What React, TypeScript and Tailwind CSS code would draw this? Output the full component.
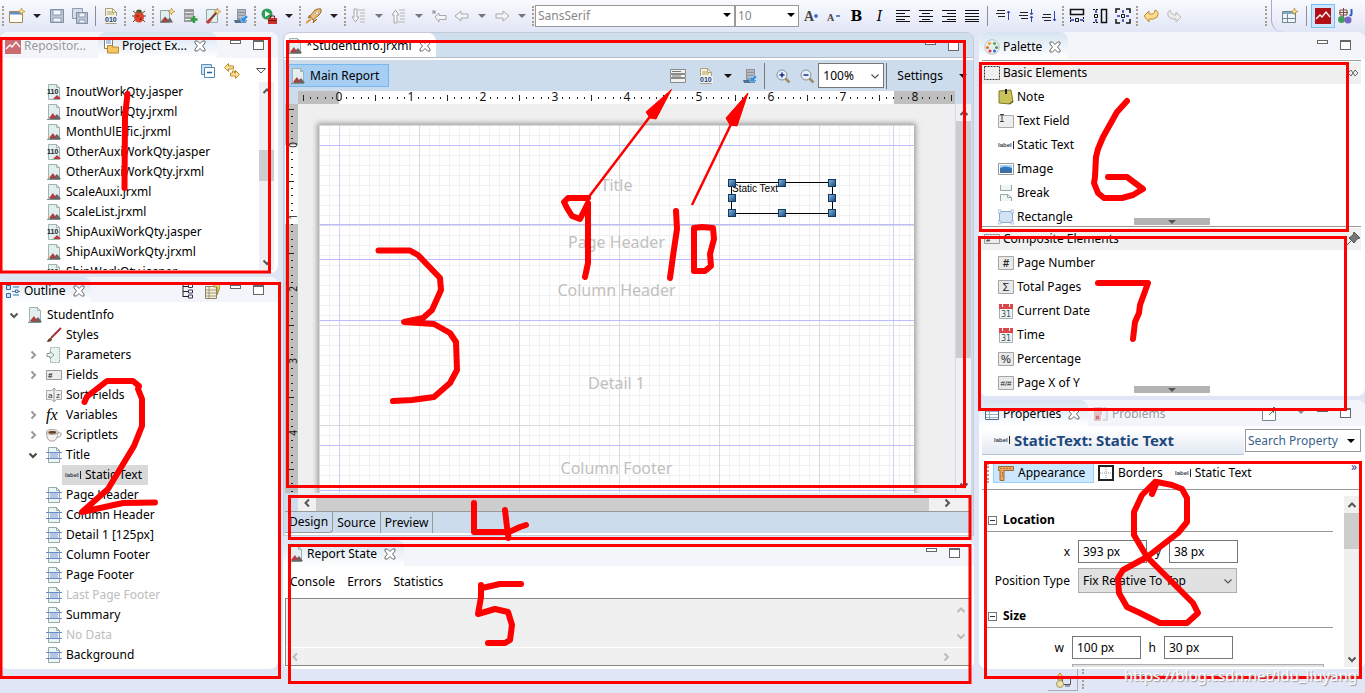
import { ReactNode } from 'react';
import clsx from 'clsx';

/* ---------- icons ---------- */

interface SvgProps {
  children: ReactNode;
  className?: string;
}

function Svg({ children, className }: SvgProps) {
  return (
    <svg viewBox="0 0 16 16" className={clsx('size-4 shrink-0', className)} fill="none" aria-hidden="true">
      {children}
    </svg>
  );
}

function Sheet() {
  return <path d="M2.5.5h8l3 3v12h-11z M10.5.5v3h3" fill="#e3efef" stroke="#9fb3b1" />;
}

function ReportIcon({ className }: { className?: string }) {
  return (
    <Svg className={className}>
      <Sheet />
      <path d="M3 15l4-4 2 1 2-2 4 5z" fill="#6b6464" />
      <path d="M3 14l4-5 3 5z" fill="#b93a3a" />
      <path d="M1 15.500h13" stroke="#7d8f8d" />
    </Svg>
  );
}

function JasperIcon() {
  return (
    <Svg>
      <Sheet />
      <path d="M7 15l4-4 4 4z" fill="#b93a3a" />
      <text x="1" y="10" fontSize="7" fontWeight="bold" fill="#222" fontFamily="Liberation Sans">110</text>
    </Svg>
  );
}

function BandIcon() {
  return (
    <Svg>
      <path d="M2.500.5h8l3 3v12h-11z" fill="#eef5f5" stroke="#93aaa6" />
      <path d="M4 6h8v5H4z" fill="#b3c6e8" />
      <path d="M0 5.500h16M0 11.500h16" stroke="#6b8cc8" />
      <path d="M10.500.5v3h3" stroke="#93aaa6" />
    </Svg>
  );
}

function BinaryIcon() {
  return (
    <Svg>
      <path d="M2.500.5h7l4 4v11h-11z" fill="#f5f1e2" stroke="#a9a07c" />
      <path d="M9.500.5v4h4M4 4h5M4 6h7" stroke="#b5a565" />
      <path d="M2 8h13v7H2z" fill="#f0f2f6" />
      <text x="2" y="14" fontSize="7" fontWeight="bold" fill="#23406e" fontFamily="Liberation Sans">010</text>
    </Svg>
  );
}

function ServerIcon() {
  return (
    <Svg>
      <path d="M4 1h9v11H4z" fill="#8f959b" />
      <path d="M5 3h7M5 6h7M5 9h7" stroke="#d5dade" />
      <path d="M1 12h13l-1 3H2z" fill="#4f6f91" />
      <path d="M8 14V8l2 2 3-3 2 2-3 3 2 2z" fill="#2f8fe0" stroke="#dff0ff" strokeWidth=".5" />
    </Svg>
  );
}

function LabelIcon() {
  return (
    <Svg>
      <text x="0" y="10" fontSize="6" fontWeight="bold" fill="#3c4650" fontFamily="Liberation Sans">label</text>
      <path d="M15.500 4v8" stroke="#222" />
    </Svg>
  );
}

function BoxIcon({ mark }: { mark: string }) {
  return (
    <Svg>
      <path d="M.5 1.500h15v13H.5z" fill="#e9e9e9" stroke="#a5a5a5" />
      <text x="8" y={mark.length > 1 ? 11 : 12} textAnchor="middle" fontSize={mark.length > 1 ? 8 : 11} fontWeight={mark === '#' ? 'bold' : 'normal'} fill="#222" fontFamily="Liberation Sans">{mark}</text>
    </Svg>
  );
}

function CalendarIcon() {
  return (
    <Svg>
      <path d="M1.500 3.500h13v12h-13z" fill="#f2f5f4" stroke="#9fb0ad" />
      <path d="M1 1h14v5H1z" fill="#d9474a" />
      <path d="M4.500 0v4M11.500 0v4" stroke="#fff" />
      <text x="8" y="14" textAnchor="middle" fontSize="8" fill="#31525a" fontFamily="DejaVu Sans">31</text>
    </Svg>
  );
}

function CloseIcon() {
  return (
    <svg viewBox="0 0 12 12" className="size-3 shrink-0" fill="#fff" stroke="#6a6a6a" aria-hidden="true">
      <path d="M1 1h2.500L6 3.500 8.500 1H11v2L8.500 6 11 9v2H8.500L6 8.500 3.500 11H1V9l2.500-3L1 3z" />
    </svg>
  );
}

function DownTriangle({ color = '#333' }: { color?: string }) {
  return (
    <svg viewBox="0 0 8 4" className="h-1 w-2 shrink-0" aria-hidden="true">
      <path d="M0 0h8L4 4z" fill={color} />
    </svg>
  );
}

const chevrons = {
  up: 'M1.500 7L5 3.500 8.500 7',
  down: 'M1.500 3.500L5 7l3.500-3.500',
  left: 'M7 1.500L3.500 5 7 8.500',
  right: 'M3.500 1.500L7 5 3.500 8.500',
};

function Chevron({ dir, color = '#555', thin }: { dir: keyof typeof chevrons; color?: string; thin?: boolean }) {
  return (
    <svg viewBox="0 0 10 10" className="size-2.5 shrink-0" fill="none" aria-hidden="true">
      <path d={chevrons[dir]} stroke={color} strokeWidth={thin ? 1.2 : 2} />
    </svg>
  );
}

function WindowButtons() {
  return (
    <div className="flex items-start justify-end gap-3 pr-3.5">
      <button aria-label="Minimize" className="h-1 w-[11px] border border-[#666] bg-white" />
      <button aria-label="Maximize" className="h-2.5 w-[11px] border border-t-2 border-[#666] bg-white" />
    </div>
  );
}

const AlignIcon = ({ d }: { d: string }) => (
  <Svg>
    <path d={d} stroke="#111" shapeRendering="crispEdges" />
  </Svg>
);

const Arrow = ({ d, fill = '#f4f5f8', stroke = '#a9a9a9' }: { d: string; fill?: string; stroke?: string }) => (
  <Svg>
    <path d={d} fill={fill} stroke={stroke} />
  </Svg>
);

const backArrow = 'M1 8l6-5v3h7v4H7v3z';
const forwardArrow = 'M15 8L9 3v3H2v4h7v3z';

/* ---------- main toolbar ---------- */

type ToolItem = { kind: 'icon'; name: string; icon: ReactNode } | { kind: 'menu'; dim?: boolean } | { kind: 'grip' } | { kind: 'line' };

const icon = (name: string, node: ReactNode): ToolItem => ({ kind: 'icon', name, icon: node });
const menu: ToolItem = { kind: 'menu' };
const dimMenu: ToolItem = { kind: 'menu', dim: true };
const grip: ToolItem = { kind: 'grip' };
const line: ToolItem = { kind: 'line' };

const star = <path d="M12.500 0l1 2.500 2.500 1-2.500 1-1 2.500-1-2.500-2.500-1 2.500-1z" fill="#fbe29a" stroke="#b98a2b" strokeWidth=".7" />;

const leftTools: ToolItem[] = [
  grip,
  icon('New', <Svg><path d="M.5 3.500h13v11H.5z" fill="#fdfdf5" stroke="#a8884a" /><path d="M1 4h12v2.500H1z" fill="#5b8fd0" />{star}</Svg>),
  menu,
  icon('Save', <Svg><path d="M1.500 1.500h13v13h-13z" fill="#b9c7d9" stroke="#7c8da3" /><path d="M4 2h8v5H4zM4 10h8v4H4z" fill="#f3f6fa" stroke="#8c9bb0" /></Svg>),
  icon('Save All', <Svg><path d="M.5.5h10v10H.5z" fill="#d5dde8" stroke="#8c9bb0" /><path d="M4.500 4.500h11v11h-11z" fill="#b9c7d9" stroke="#7c8da3" /><path d="M7 5h6v4H7zM7 12h6v3H7z" fill="#f3f6fa" stroke="#8c9bb0" /></Svg>),
  line,
  icon('Compile', <BinaryIcon />),
  grip,
  icon('Debug', <Svg><path d="M2 3l4 3M14 3l-4 3M1 8h14M2 14l4-4M14 14l-4-4" stroke="#4b4b2a" /><ellipse cx="8" cy="9" rx="5" ry="5.500" fill="#d8442b" /><path d="M5 4.500a3 3 0 016 0z" fill="#4a5a2a" /><circle cx="6.500" cy="8" r="1" fill="#8b1a0c" /><circle cx="9.500" cy="11" r="1" fill="#8b1a0c" /></Svg>),
  grip,
  icon('New Report', <Svg><path d="M1.500 2.500h9v12h-9z" fill="#e3efef" stroke="#8fa5a3" /><path d="M1 14.500l5-6 3 3 2-2 3 5z" fill="#6b6464" /><path d="M3 14l3-5 3 4z" fill="#b93a3a" />{star}</Svg>),
  icon('New Data Adapter', <Svg><path d="M2 1h10v13H2z" fill="#9a9a9a" /><path d="M3 4.500h8M3 8h8M3 11.500h8" stroke="#eee" /><path d="M12 8v7M8.500 11.500h7" stroke="#2f9e44" strokeWidth="2.500" /></Svg>),
  icon('New Style', <Svg><path d="M1.500 1.500h11v13h-11z" fill="#e3efef" stroke="#8fa5a3" /><path d="M3 14L12 4" stroke="#7a3a2a" strokeWidth="2" /><path d="M2 15l4-4" stroke="#c43a3a" strokeWidth="3" />{star}</Svg>),
  grip,
  icon('Publish', <ServerIcon />),
  grip,
  icon('Run', <Svg><circle cx="6" cy="6" r="5.500" fill="#2f9e5a" /><path d="M4 3l5 3-5 3z" fill="#fff" /><path d="M7 10h9v6H7z" fill="#c8322b" /><path d="M9.500 10V8h4v2M7 12.500h9" stroke="#7a1712" /></Svg>),
  menu,
  grip,
  icon('Launch', <Svg><path d="M4 8l5-6q4-2 6-1 1 3-2 6l-6 5z" fill="#ecc07a" stroke="#9a6b2c" /><path d="M4 7L2 10l3-1M8 12l-1 3 4-4" fill="#c98a3a" stroke="#9a6b2c" /><path d="M0 15l5-4" stroke="#e8973a" strokeWidth="2" /><circle cx="11" cy="5" r="1.500" fill="#fff" stroke="#888" strokeWidth=".5" /></Svg>),
  menu,
  grip,
  icon('Next Annotation', <Svg><path d="M7 2h7M9 5h5M9 8h5M9 11h5M9 14h5" stroke="#b5b5b5" /><path d="M3 1h3v8h2l-3.500 5L1 9h2z" fill="#f4f5f8" stroke="#a9a9a9" /></Svg>),
  dimMenu,
  icon('Previous Annotation', <Svg><path d="M8 2h6M9 5h5M9 8h5M9 11h5M7 14h7" stroke="#b5b5b5" /><path d="M3 15h3V7h2L4.500 2 1 7h2z" fill="#f4f5f8" stroke="#a9a9a9" /></Svg>),
  dimMenu,
  icon('Last Edit', <Svg><path d="M1 4h4M3 2v4M1.500 2.500l3 3M4.500 2.500l-3 3" stroke="#999" /><path d="M4 9l4-4v2.500h7v4H8V14z" fill="#f4f5f8" stroke="#a9a9a9" /></Svg>),
  icon('Back', <Arrow d={backArrow} />),
  dimMenu,
  icon('Forward', <Arrow d={forwardArrow} />),
  dimMenu,
  grip,
];

const fontSign = (size: number, sign: string) => (
  <Svg>
    <text x="1" y="13" fontSize={size} fontWeight="bold" fill="#444" fontFamily="Liberation Serif">A</text>
    <path d={sign} stroke="#3560c0" strokeWidth="1.500" />
  </Svg>
);

const rightTools: ToolItem[] = [
  icon('Increase Font', fontSign(14, 'M11 8h4M13 6v4')),
  icon('Decrease Font', fontSign(10, 'M10 8h4')),
  icon('Bold', <span className="font-['DejaVu_Serif'] text-sm font-bold">B</span>),
  icon('Italic', <span className="font-['DejaVu_Serif'] text-sm italic">I</span>),
  icon('Align Left', <AlignIcon d="M1 2.500h14M1 5.500h9M1 8.500h14M1 11.500h9M1 13.500h14" />),
  icon('Align Center', <AlignIcon d="M1 2.500h14M4 5.500h8M1 8.500h14M4 11.500h8M1 13.500h14" />),
  icon('Align Right', <AlignIcon d="M1 2.500h14M6 5.500h9M1 8.500h14M6 11.500h9M1 13.500h14" />),
  icon('Justify', <AlignIcon d="M1 2.500h14M1 5.500h14M1 8.500h14M1 11.500h14M1 13.500h14" />),
  line,
  icon('Align Top', <Svg><path d="M2 2.500h8M1 5.500h9M3 8.500h7" stroke="#222" /><path d="M13.500 12V3M12 5l1.500-2L15 5" stroke="#3344aa" /></Svg>),
  icon('Align Middle', <Svg><path d="M2 4.500h8M1 7.500h9M3 10.500h7" stroke="#222" /><path d="M13.500 1v5M13.500 9v5M12 5l1.500 2L15 5M12 10l1.500-2 1.500 2" stroke="#3344aa" /></Svg>),
  icon('Align Bottom', <Svg><path d="M2 6.500h8M1 9.500h9M3 12.500h7" stroke="#222" /><path d="M13.500 3v10M12 11l1.500 2L15 11" stroke="#3344aa" /></Svg>),
  grip,
  icon('Fit Width', <Svg><path d="M1.500 1.500h13v5h-13z" stroke="#111" strokeWidth="1.500" /><path d="M1.500 9v6M14.500 9v6" stroke="#111" strokeDasharray="2 1" /><path d="M6.500 10.500h3v3h-3z" stroke="#111" /><path d="M2 12h3M11 12h3" stroke="#2233bb" strokeWidth="1.500" /></Svg>),
  icon('Fit Height', <Svg><path d="M9.500 1.500h5v13h-5z" stroke="#111" strokeWidth="1.500" /><path d="M1 1.500h6M1 14.500h6" stroke="#111" strokeDasharray="2 1" /><path d="M2.500 6.500h3v3h-3z" stroke="#111" /><path d="M4 2v3M4 11v3" stroke="#2233bb" strokeWidth="1.500" /></Svg>),
  icon('Fit Both', <Svg><path d="M1 5V1h4M11 1h4v4M15 11v4h-4M5 15H1v-4" stroke="#111" strokeWidth="1.500" /><path d="M6.500 6.500h3v3h-3z" stroke="#111" /><path d="M8 2v3M8 11v3M2 8h3M11 8h3" stroke="#2233bb" strokeWidth="1.500" /></Svg>),
  grip,
  icon('Undo', <Arrow fill="#fbdc8c" stroke="#c08a2a" d="M1 8l5-5v3q6 1 6-4 5 2 2 7-3 3-8 2v3z" />),
  icon('Redo', <Arrow fill="#ececec" stroke="#b9b9b9" d="M15 9l-5-5v3Q5 7 4 2 0 5 3 9q3 3 7 2v3z" />),
];

function Grip() {
  return <span className="h-5 w-0 border-l-2 border-dotted border-[#a89f8e]" />;
}

function Tools({ items }: { items: ToolItem[] }) {
  return (
    <>
      {items.map((item, i) => {
        switch (item.kind) {
          case 'icon':
            return <button key={i} aria-label={item.name} className="flex h-6 w-[23px] shrink-0 items-center justify-center">{item.icon}</button>;
          case 'menu':
            return <button key={i} aria-label="More" className="flex h-6 w-[17px] shrink-0 items-center justify-center"><DownTriangle color={item.dim ? '#777' : '#222'} /></button>;
          case 'grip':
            return <span key={i} className="flex w-[5px] shrink-0 justify-center"><Grip /></span>;
          default:
            return <span key={i} className="flex w-2 shrink-0 justify-center"><span className="h-5 w-px bg-[#8a8f9a]" /></span>;
        }
      })}
    </>
  );
}

function MainToolbar() {
  return (
    <header className="flex h-8 shrink-0 items-center bg-linear-to-b from-[#f9fafe] to-[#e1e6f6]">
      <Tools items={leftTools} />
      <Combo label="Font name" value="SansSerif" className="w-[200px]" />
      <Combo label="Font size" value="10" className="w-16" />
      <Tools items={rightTools} />
      <div className="ml-auto flex h-8 items-center">
        <Grip />
        <div className="ml-1 flex h-8 items-center rounded-bl-xl border-l border-[#a9adc0] pr-2.5 pl-1.5">
          <button aria-label="Open Perspective" className="flex w-6 justify-center">
            <Svg><path d="M.5 3.500h13v11H.5z" fill="#eef5fb" stroke="#6f8792" /><path d="M1 4h12v2H1z" fill="#7fa9bd" /><path d="M5.500 6v9M1 10.500h12" stroke="#6f8792" />{star}</Svg>
          </button>
          <span className="mx-1 h-5 w-px bg-[#8a8f9a]" />
          <button aria-label="Report Design" className="flex h-6 w-6 items-center justify-center border border-[#7fbdf0] bg-[#cce6ff]">
            <Svg><path d="M0 0h16v16H0z" fill="#b11116" /><path d="M1 11l4-4 2 2 4-5 4 5" stroke="#fff" strokeWidth="1.300" /></Svg>
          </button>
          <button aria-label="Java" className="flex w-5 justify-center">
            <Svg><path d="M3 2h7v5H3zM6.500 0v10M2 4.500h9" stroke="#7b4a3a" /><path d="M14.500 1v5q0 2-2 1" stroke="#2f5fc0" strokeWidth="2" /><circle cx="4.500" cy="11.500" r="3.500" fill="#3fa05a" /><circle cx="11" cy="12" r="3.500" fill="#7a63c0" /></Svg>
          </button>
        </div>
      </div>
    </header>
  );
}

function Combo({ label, value, className }: { label: string; value: string; className: string }) {
  return (
    <div className={clsx('relative shrink-0', className)}>
      <select aria-label={label} defaultValue={value} className="h-[22px] w-full appearance-none border border-[#999] bg-white px-0.5 text-[#888]">
        <option>{value}</option>
      </select>
      <span className="pointer-events-none absolute top-2 right-1 flex"><DownTriangle color="#000" /></span>
    </div>
  );
}

/* ---------- shared pane parts ---------- */

interface TabProps {
  icon: ReactNode;
  title: string;
  active?: boolean;
  className?: string;
}

function PaneTab({ icon: tabIcon, title, active, className }: TabProps) {
  return (
    <button
      className={clsx(
        'flex h-full shrink-0 items-center gap-[3px] pt-0.5 pl-[5px]',
        active ? 'rounded-tr-lg bg-linear-to-b from-[#d6e4f0] to-white' : 'text-[#999]',
        className,
      )}
    >
      {tabIcon}
      <span>{title}</span>
      {active && <span className="ml-1"><CloseIcon /></span>}
    </button>
  );
}

function VScroll({ thumb, className }: { thumb: string; className?: string }) {
  return (
    <div className={clsx('flex w-[15px] shrink-0 flex-col items-center bg-[#f0f0f0]', className)}>
      <span className="flex h-[17px] shrink-0 items-center"><Chevron dir="up" /></span>
      <div className="min-h-0 w-full flex-1"><div className={clsx('w-full bg-[#cdcdcd]', thumb)} /></div>
      <span className="flex h-[17px] shrink-0 items-center"><Chevron dir="down" /></span>
    </div>
  );
}

/* ---------- project explorer ---------- */

const files = [
  'InoutWorkQty.jasper',
  'InoutWorkQty.jrxml',
  'MonthUlEffic.jrxml',
  'OtherAuxiWorkQty.jasper',
  'OtherAuxiWorkQty.jrxml',
  'ScaleAuxi.jrxml',
  'ScaleList.jrxml',
  'ShipAuxiWorkQty.jasper',
  'ShipAuxiWorkQty.jrxml',
  'ShipWorkQty.jasper',
];

function ProjectExplorer() {
  return (
    <section className="flex h-[241px] shrink-0 flex-col overflow-hidden rounded-t-lg rounded-br-lg bg-white">
      <div className="flex h-[26px] shrink-0 bg-[#f4f5fb]">
        <PaneTab
          title="Repositor..."
          className="w-[98px]"
          icon={<Svg className="opacity-60"><path d="M0 0h16v16H0z" fill="#b11116" /><path d="M1 11l4-4 2 2 4-5 4 5" stroke="#fff" strokeWidth="1.300" /></Svg>}
        />
        <PaneTab
          title="Project Ex..."
          active
          className="w-[119px] rounded-tl-lg"
          icon={<Svg><path d="M1.500.5h8v10h-8z" fill="#fff" stroke="#8b7d66" /><path d="M3 3h5M3 5h5" stroke="#5b8fd0" /><path d="M4.500 7.500h4l1 1.500h6v6h-11z" fill="#f6c663" stroke="#b98a2b" /></Svg>}
        />
        <div className="flex-1 pt-2"><WindowButtons /></div>
      </div>
      <div className="flex h-6 shrink-0 items-center justify-end gap-2 pt-0.5 pr-3">
        <button aria-label="Collapse All">
          <Svg className="size-3.5"><path d="M1.500 1.500h10v10h-10z" fill="#cfe3f5" stroke="#5b8fb9" /><path d="M4.500 4.500h10v10h-10z" fill="#fff" stroke="#4b86b4" /><path d="M7 9.500h5" stroke="#1f5f9a" strokeWidth="1.500" /></Svg>
        </button>
        <button aria-label="Link with Editor">
          <Svg><path d="M.5 4.500l4-4v2.500h5v3h-5v2.500z" fill="#fbe29a" stroke="#c08a2a" /><path d="M15.500 11.500l-4 4V13h-5v-3h2V8h2v2h1V7.500z" fill="#fbe29a" stroke="#c08a2a" /></Svg>
        </button>
        <button aria-label="View Menu" className="ml-2">
          <svg viewBox="0 0 10 6" className="h-1.5 w-2.5" fill="#fff" stroke="#555"><path d="M.5.5h9L5 5z" /></svg>
        </button>
      </div>
      <div className="flex min-h-0 flex-1 pr-1 pb-[3px]">
        <ul className="min-w-0 flex-1 overflow-hidden pl-[46px]">
          {files.map((file) => (
            <li key={file} className="flex h-5 items-center gap-1">
              {file.endsWith('.jasper') ? <JasperIcon /> : <ReportIcon />}
              <span>{file}</span>
            </li>
          ))}
        </ul>
        <VScroll thumb="mt-[51px] h-[31px]" />
      </div>
    </section>
  );
}

/* ---------- outline ---------- */

interface OutlineRow {
  label: string;
  icon: ReactNode;
  expander?: 'right' | 'down';
  dim?: boolean;
}

const outlineRows: OutlineRow[] = [
  { label: 'Styles', icon: <Svg><path d="M5 11L15 1" stroke="#a33" strokeWidth="2" /><path d="M1 15q1-4 4-4l1 1q0 3-5 3z" fill="#6b3f2a" /></Svg> },
  { label: 'Parameters', expander: 'right', icon: <Svg><path d="M4.500.5h9v15h-9z" fill="#e8f2f0" stroke="#93aaa6" strokeDasharray="2 1" /><path d="M1 6.500h3v-2l4 3.500-4 3.500v-2H1z" fill="#f5faf8" stroke="#7d9994" /></Svg> },
  { label: 'Fields', expander: 'right', icon: <Svg><path d="M.5 3.500h15v9H.5z" fill="#ececec" stroke="#999" /><text x="2" y="11" fontSize="8" fontWeight="bold" fill="#222" fontFamily="Liberation Sans">#</text></Svg> },
  { label: 'Sort Fields', icon: <Svg><path d="M.5 3.500h5L8 1l2.500 2.500h5v9h-5L8 15l-2.500-2.500h-5z" fill="#efefef" stroke="#aaa" /><path d="M8 2v12" stroke="#999" /><text x="2" y="11" fontSize="8" fill="#333" fontFamily="Liberation Sans">a</text><text x="10" y="11" fontSize="8" fill="#333" fontFamily="Liberation Sans">z</text></Svg> },
  { label: 'Variables', expander: 'right', icon: <span className="w-4 shrink-0 font-['Liberation_Serif'] text-base leading-5 italic">fx</span> },
  { label: 'Scriptlets', expander: 'right', icon: <Svg><path d="M12 6q4-1 3 2t-4 2" stroke="#999" /><path d="M.5 5q0 8 4 9h3q4-1 4.500-9z" fill="#f4f1ee" stroke="#a7a09a" /><ellipse cx="6.300" cy="5" rx="5.800" ry="2.500" fill="#f4f1ee" stroke="#a7a09a" /><ellipse cx="6.300" cy="5.200" rx="4" ry="1.500" fill="#6b4326" /></Svg> },
  { label: 'Title', expander: 'down', icon: <BandIcon /> },
  { label: 'Page Header', icon: <BandIcon /> },
  { label: 'Column Header', icon: <BandIcon /> },
  { label: 'Detail 1 [125px]', icon: <BandIcon /> },
  { label: 'Column Footer', icon: <BandIcon /> },
  { label: 'Page Footer', icon: <BandIcon /> },
  { label: 'Last Page Footer', icon: <BandIcon />, dim: true },
  { label: 'Summary', icon: <BandIcon /> },
  { label: 'No Data', icon: <BandIcon />, dim: true },
  { label: 'Background', icon: <BandIcon /> },
];

function Outline() {
  return (
    <section className="flex min-h-0 flex-1 flex-col overflow-hidden rounded-lg bg-white">
      <div className="flex h-[25px] shrink-0 bg-[#f4f5fb]">
        <PaneTab
          title="Outline"
          active
          className="w-[91px]"
          icon={<Svg><path d="M1.500 2.500h4v4h-4zM1.500 10.500h4v4h-4z" fill="#cfe3f5" stroke="#2f6fb0" /><path d="M8 4h6M8 12h6" stroke="#2f6fb0" /><path d="M10.500 7h2.500v2.500h-2.500z" stroke="#2f6fb0" /><path d="M7 8.500h3M13 8.500h2" stroke="#777" /></Svg>}
        />
        <div className="ml-auto flex items-start gap-2 pt-1.5">
          <button aria-label="Tree View"><Svg className="size-3.5"><path d="M3 0v14M3 3.500h5M3 8.500h5M3 13.500h5" stroke="#222" /><path d="M8.500 1.500h4v3h-4zM8.500 7h4v3h-4zM8.500 12h4v3h-4z" fill="#fff" stroke="#335" /></Svg></button>
          <button aria-label="Preview"><Svg><path d="M1.500 3.500h11v12h-11z" fill="#f3efdf" stroke="#8c8463" /><path d="M2 7h10M2 10h10M2 13h10M5 4v11" stroke="#a39a76" /><path d="M10 0h6v4l-3 8V4h-3z" fill="#e8d36a" stroke="#998a3a" /></Svg></button>
        </div>
        <div className="w-[58px] pt-2"><WindowButtons /></div>
      </div>
      <ul className="flex-1 pt-[3px]">
        <li className="flex h-5 items-center gap-1 pl-[9px]">
          <Chevron dir="down" />
          <ReportIcon className="ml-1" />
          <span>StudentInfo</span>
        </li>
        {outlineRows.map((row) => (
          <li key={row.label}>
            <div className="flex h-5 items-center gap-1 pl-7">
              <span className="flex w-3.5 shrink-0">
                {row.expander && <Chevron dir={row.expander} color={row.expander === 'down' ? '#444' : '#999'} />}
              </span>
              {row.icon}
              <span className={clsx(row.dim && 'text-[#bdbdbd]')}>{row.label}</span>
            </div>
            {row.label === 'Title' && (
              <div className="ml-[62px] flex h-5 w-[86px] items-center gap-1 bg-[#d9d9d9] pl-[3px]">
                <LabelIcon />
                <span className="whitespace-nowrap">Static Text</span>
              </div>
            )}
          </li>
        ))}
      </ul>
    </section>
  );
}

/* ---------- report editor ---------- */

// 72 px per inch, ten ticks per inch
const INCH = 72;

function rulerTicks(from: number, to: number) {
  const ticks: { pos: number; kind: 'num' | 'half' | 'dot'; value: number }[] = [];
  for (let i = from; i <= to; i++) {
    ticks.push({ pos: (i * INCH) / 10, kind: i % 10 === 0 ? 'num' : i % 5 === 0 ? 'half' : 'dot', value: i / 10 });
  }
  return ticks;
}

function HorizontalRuler() {
  return (
    <div className="flex h-[13px] shrink-0">
      <div className="w-[13px] shrink-0" />
      <div className="min-w-0 flex-1 bg-[#bfbfbf]">
        <svg className="block h-[13px] w-full">
          <rect x="41" width="555" height="13" fill="#fff" />
          {rulerTicks(-5, 85).map((t) =>
            t.kind === 'num' ? (
              <text key={t.pos} x={41 + t.pos} y="10" textAnchor="middle" fontSize="12" fill="#111">{t.value}</text>
            ) : (
              <rect key={t.pos} x={Math.round(41 + t.pos)} y={t.kind === 'half' ? 4 : 6} width="1" height={t.kind === 'half' ? 6 : 2} fill="#222" />
            ),
          )}
        </svg>
      </div>
      <div className="w-4 shrink-0" />
    </div>
  );
}

function VerticalRuler() {
  return (
    <svg className="h-full w-[13px] shrink-0 bg-[#bfbfbf]">
      <rect y="41" width="13" height="79" fill="#fff" />
      {rulerTicks(-5, 48).map((t) =>
        t.kind === 'num' ? (
          <text key={t.pos} transform={`translate(12 ${41 + t.pos}) rotate(-90)`} textAnchor="middle" fontSize="10" fill="#111">{t.value}</text>
        ) : (
          <rect key={t.pos} y={Math.round(41 + t.pos)} x={t.kind === 'half' ? 3 : 6} height="1" width={t.kind === 'half' ? 6 : 2} fill="#222" />
        ),
      )}
    </svg>
  );
}

const bands = [
  { name: 'Title', height: 'h-[79px]' },
  { name: 'Page Header', height: 'h-[35px]' },
  { name: 'Column Header', height: 'h-[61px]' },
  { name: 'Detail 1', height: 'h-[125px]' },
  { name: 'Column Footer', height: 'h-[45px]' },
];

const handles = [
  '-top-1 -left-1', '-top-1 left-[46px]', '-top-1 -right-1',
  'top-[11px] -left-1', 'top-[11px] -right-1',
  '-bottom-1 -left-1', '-bottom-1 left-[46px]', '-bottom-1 -right-1',
];

function ReportPage() {
  return (
    <div className="relative ml-[21px] h-[600px] w-[595px] bg-white shadow-[0_0_5px_2px_#a0a0a0]">
      <div className="absolute inset-0 bg-[linear-gradient(to_right,#f1f1f1_1px,transparent_1px),linear-gradient(to_bottom,#f1f1f1_1px,transparent_1px)] bg-[size:10px_10px]" />
      <div className="absolute inset-0 bg-[linear-gradient(to_right,#d9d9d9_1px,transparent_1px),linear-gradient(to_bottom,#d9d9d9_1px,transparent_1px)] bg-[size:100px_100px]" />
      <div className="absolute inset-y-0 right-5 left-5 border-x border-[#d0d0fa]" />
      <div className="relative pt-5">
        <div className="border-y border-[#bcbcff] pb-11">
          {bands.map((band) => (
            <div key={band.name} className={clsx('flex items-center justify-center border-b border-[#bcbcff] text-base text-[#c0c0c0]', band.height)}>
              {band.name}
            </div>
          ))}
        </div>
      </div>
      <div className="absolute top-[57px] left-[412px] h-8 w-[102px] border border-black font-['Liberation_Sans'] text-[10px] leading-3">
        Static Text
        {handles.map((pos) => (
          <span key={pos} className={clsx('absolute size-2 border border-[#123a5e] bg-linear-to-br from-[#7fb2e0] to-[#1f4f80]', pos)} />
        ))}
      </div>
    </div>
  );
}

function EditorToolbar() {
  return (
    <div className="flex h-[31px] shrink-0 items-center bg-[#cddcec] pl-0.5">
      <button className="flex h-[23px] w-[102px] items-center gap-1 border border-[#78b8ee] bg-[#a6cdf2] pl-0.5">
        <ReportIcon />
        Main Report
      </button>
      <div className="ml-auto flex items-center">
        <button aria-label="Dataset" className="mr-3">
          <Svg><path d="M.5 1.500h15v4H.5zM.5 6.500h15v3H.5zM.5 10.500h15v4H.5z" fill="#f2f2f0" stroke="#8a8a86" /><path d="M2 3.500h9M2 8h9" stroke="#555" strokeWidth=".8" /></Svg>
        </button>
        <button aria-label="Compile Report"><BinaryIcon /></button>
        <button aria-label="Compile options" className="mx-2.5"><DownTriangle color="#111" /></button>
        <button aria-label="Publish Report"><ServerIcon /></button>
        <span className="mr-2.5 ml-1.5 h-[26px] w-px bg-[#777]" />
        {['M4.500 7h5M7 4.500v5', 'M4.500 7h5'].map((d, i) => (
          <button key={d} aria-label={i ? 'Zoom Out' : 'Zoom In'} className={i ? 'mr-[3px]' : 'mr-2'}>
            <Svg><path d="M10 10l4.500 4.500" stroke="#a58b6a" strokeWidth="2.500" /><circle cx="7" cy="7" r="5" fill="#e6f0fa" stroke="#8a8f94" /><path d={d} stroke="#1c2f8a" strokeWidth="1.500" /></Svg>
          </button>
        ))}
        <div className="relative">
          <select aria-label="Zoom" defaultValue="100%" className="h-[25px] w-[66px] appearance-none border border-[#777] bg-white px-1">
            <option>100%</option>
          </select>
          <span className="pointer-events-none absolute top-2 right-1"><Chevron dir="down" thin /></span>
        </div>
        <span className="mr-2.5 ml-0.5 h-[26px] w-px bg-[#777]" />
        <button className="flex items-center gap-4 pr-1">Settings <DownTriangle color="#111" /></button>
      </div>
    </div>
  );
}

function Editor() {
  return (
    <section className="flex min-h-0 flex-1 flex-col overflow-hidden rounded-t-lg border border-[#c5cad6] bg-[#cddcec]">
      <div className="flex h-[25px] shrink-0 border-b border-[#b5bccb] bg-[#d0dfee]">
        <button className="flex w-[152px] items-center gap-[3px] rounded-tr-lg bg-white pt-0.5 pl-[3px]">
          <ReportIcon />
          <span>*StudentInfo.jrxml</span>
          <span className="ml-1"><CloseIcon /></span>
        </button>
        <div className="flex-1 pt-2"><WindowButtons /></div>
      </div>
      <div className="h-0.5 shrink-0 bg-white" />
      <div className="flex min-h-0 flex-1 flex-col px-px pr-0.5">
        <EditorToolbar />
        <HorizontalRuler />
        <div className="flex min-h-0 flex-1">
          <VerticalRuler />
          <div className="min-w-0 flex-1 overflow-hidden bg-[#efefef] pt-[21px]">
            <ReportPage />
          </div>
          <VScroll thumb="h-[237px]" className="ml-px" />
        </div>
        <div className="ml-[13px] flex h-[18px] shrink-0 items-stretch border-t-2 border-[#e6eef6] bg-[#f0f0f0]">
          <span className="flex w-[18px] items-center justify-center"><Chevron dir="left" /></span>
          <div className="flex-1 bg-[#cdcdcd]" />
          <span className="flex w-9 items-center justify-center"><Chevron dir="right" /></span>
          <span className="w-1.5" />
        </div>
        <div className="flex h-[22px] shrink-0 border-t border-[#9a9a9a]">
          {['Design', 'Source', 'Preview'].map((tab, i) => (
            <button key={tab} className={clsx('border-r border-[#9a9a9a] px-1', i === 0 && 'rounded-br border-b')}>{tab}</button>
          ))}
        </div>
        <div className="h-0.5 shrink-0 bg-white" />
      </div>
    </section>
  );
}

/* ---------- report state ---------- */

function ReportState() {
  return (
    <section className="flex h-[129px] shrink-0 flex-col overflow-hidden rounded-lg bg-white">
      <div className="flex h-[26px] shrink-0 bg-[#f4f5fb]">
        <PaneTab title="Report State" active className="w-[121px]" icon={<ReportIcon />} />
        <div className="flex-1 pt-2"><WindowButtons /></div>
      </div>
      <div className="flex h-8 shrink-0 items-center gap-3 pl-[7px]">
        {['Console', 'Errors', 'Statistics'].map((item) => (
          <button key={item}>{item}</button>
        ))}
      </div>
      <div className="mr-1 mb-[3px] ml-0.5 flex min-h-0 flex-1 flex-col border border-[#888] bg-[#f0f0f0]">
        <div className="flex min-h-0 flex-1 border-b border-white">
          <div className="flex-1" />
          <div className="flex w-[17px] flex-col items-center justify-between py-1.5">
            <Chevron dir="up" color="#bbb" />
            <Chevron dir="down" color="#bbb" />
          </div>
        </div>
        <div className="flex h-[17px] items-center justify-between pr-[18px] pl-1">
          <Chevron dir="left" color="#bbb" />
          <Chevron dir="right" color="#bbb" />
        </div>
      </div>
    </section>
  );
}

/* ---------- palette ---------- */

interface Drawer {
  title: string;
  icon: ReactNode;
  items: { label: string; icon: ReactNode }[];
}

const drawers: Drawer[] = [
  {
    title: 'Basic Elements',
    icon: <Svg><path d="M.5 1.500h15v13H.5z" fill="#f0f0f0" stroke="#333" strokeDasharray="2 1" /></Svg>,
    items: [
      { label: 'Note', icon: <Svg><path d="M1 2l12-1 2 12-3 2-11-1z" fill="#c9c35a" stroke="#7d7a2a" /><path d="M8 0v5" stroke="#222" strokeWidth="2" /><path d="M11 15l4-3" stroke="#55531c" /></Svg> },
      { label: 'Text Field', icon: <Svg><path d="M.5 2.500h15v12H.5z" fill="#eee" stroke="#aaa" /><path d="M2 1.500h4M4 1.500v7M2 8.500h4" stroke="#444" /></Svg> },
      { label: 'Static Text', icon: <LabelIcon /> },
      { label: 'Image', icon: <Svg><path d="M.5 2.500h15v11H.5z" fill="#fff" stroke="#999" /><path d="M2 4h12v8H2z" fill="#2f78c4" /><path d="M2 12V9q4-2 12 1v2z" fill="#3f6fa0" /><path d="M2 7q5-3 12 0V4H2z" fill="#a9d4f2" /></Svg> },
      { label: 'Break', icon: <Svg><path d="M2.500 0v5.500h11V0" fill="#eef5f5" stroke="#93aaa6" /><path d="M2.500 16V9.500h7l4 3V16M9.500 9.500v3h4" fill="#eef5f5" stroke="#93aaa6" /></Svg> },
      { label: 'Rectangle', icon: <Svg><path d="M1.500 2.500h13v11h-13z" fill="#d3e2f4" stroke="#8fabd0" /><path d="M0 1h3v3H0zM13 1h3v3h-3zM0 12h3v3H0zM13 12h3v3h-3z" fill="#f3f7fc" stroke="#8fabd0" strokeWidth=".7" /></Svg> },
    ],
  },
  {
    title: 'Composite Elements',
    icon: <Svg><path d="M.5 3.500h15v9H.5z" fill="#ececec" stroke="#999" /><text x="2" y="11" fontSize="8" fontWeight="bold" fill="#222" fontFamily="Liberation Sans">#</text></Svg>,
    items: [
      { label: 'Page Number', icon: <BoxIcon mark="#" /> },
      { label: 'Total Pages', icon: <BoxIcon mark="Σ" /> },
      { label: 'Current Date', icon: <CalendarIcon /> },
      { label: 'Time', icon: <CalendarIcon /> },
      { label: 'Percentage', icon: <BoxIcon mark="%" /> },
      { label: 'Page X of Y', icon: <BoxIcon mark="#/#" /> },
    ],
  },
];

function Palette() {
  return (
    <section className="flex min-h-0 flex-1 flex-col overflow-hidden rounded-lg bg-white">
      <div className="flex h-[27px] shrink-0 bg-[#f4f5fb]">
        <PaneTab
          title="Palette"
          active
          className="w-[89px]"
          icon={<Svg><circle cx="8" cy="8" r="7.300" fill="#e9eef4" stroke="#b9c4cf" /><circle cx="5.500" cy="4.500" r="1.500" fill="#f0a020" /><circle cx="10.500" cy="4.500" r="1.500" fill="#4caf50" /><circle cx="3.500" cy="8.500" r="1.500" fill="#e0702a" /><circle cx="12.500" cy="8.500" r="1.500" fill="#3fa05a" /><circle cx="6" cy="12" r="1.500" fill="#d33" /><circle cx="10.500" cy="12" r="1.500" fill="#2f6fd0" /></Svg>}
        />
        <div className="flex-1 pt-2"><WindowButtons /></div>
      </div>
      <div className="mt-px mr-1 ml-[3px] border-t border-[#999]">
        {drawers.map((drawer, i) => (
          <div key={drawer.title} className="relative">
            <div className="mt-px flex h-[22px] items-center gap-[3px] bg-[#f0f0f0] pl-0.5">
              {drawer.icon}
              <span>{drawer.title}</span>
              <span className="ml-auto flex w-4 justify-center">
                {i === 0 ? (
                  <svg viewBox="0 0 12 8" className="h-2 w-3" fill="none" stroke="#666"><path d="M4 1L1 4l3 3M4 1l2 3-2 3M8 1L6 4l2 3M8 1l3 3-3 3" /></svg>
                ) : (
                  <Svg className="size-2.5"><path d="M9 1l6 6-3 1-3 4-5-5 4-3zM6 10l-5 5" fill="#777" stroke="#555" /></Svg>
                )}
              </span>
            </div>
            <ul className={clsx('pt-px', i === 0 ? 'h-[143px] border-b border-[#999]' : 'h-[145px]')}>
              {drawer.items.map((item) => (
                <li key={item.label}>
                  <button className="flex h-6 w-full items-center gap-[3px] pl-4">
                    {item.icon}
                    <span>{item.label}</span>
                  </button>
                </li>
              ))}
            </ul>
            <span className="absolute bottom-0.5 left-[152px] flex h-[7px] w-[76px] items-center justify-center bg-[#b4b4b4]">
              <DownTriangle color="#555" />
            </span>
          </div>
        ))}
      </div>
    </section>
  );
}

/* ---------- properties ---------- */

function GroupTitle({ title }: { title: string }) {
  return (
    <h3 className="mr-[11px] flex h-6 items-center gap-1.5 border-b border-[#999] pl-px font-bold">
      <button aria-label={`Collapse ${title}`} className="mt-0.5 flex size-[9px] items-center justify-center border border-[#777] bg-white">
        <span className="h-px w-[5px] bg-[#333]" />
      </button>
      {title}
    </h3>
  );
}

function Field({ id, label, value, labelWidth }: { id: string; label: string; value: string; labelWidth: string }) {
  return (
    <>
      <label htmlFor={id} className={clsx('shrink-0 pr-2 text-right', labelWidth)}>{label}</label>
      <input id={id} defaultValue={value} className="h-[23px] w-[69px] border border-[#777] bg-white px-1" />
    </>
  );
}

function Properties() {
  return (
    <section className="flex h-[269px] shrink-0 flex-col overflow-hidden rounded-lg bg-white">
      <div className="flex h-[26px] shrink-0 bg-[#f4f5fb]">
        <PaneTab
          title="Properties"
          active
          className="w-[109px]"
          icon={<Svg><path d="M1.500 2.500h13v11h-13z" fill="#fff" stroke="#4a6688" /><path d="M2 5.500h12M2 8.500h12M2 11.500h12M5.500 3v10" stroke="#9ab0c8" /></Svg>}
        />
        <PaneTab
          title="Problems"
          icon={<Svg className="opacity-60"><path d="M1 1h8v8H1zM1 8h7v7H1z" fill="#d9a0a0" /><path d="M3 10l3 3M6 10l-3 3" stroke="#b11116" strokeWidth="1.500" /><path d="M10 2h4v12h-4" stroke="#8c9bb0" fill="#eef" /></Svg>}
        />
        <button aria-label="Pin" className="ml-auto pt-0.5">
          <Svg><path d="M1.500 3.500h13v11h-13z" fill="#fff" stroke="#6f8792" /><path d="M1 3h9v2H1z" fill="#e5c56a" /><path d="M8 9l3-3M9 3l4 4M10 4l3-3 2 2-3 3z" stroke="#2f8e44" fill="#2f9e44" /></Svg>
        </button>
        <span className="pt-2.5 pl-5"><DownTriangle color="#888" /></span>
        <div className="w-[60px] pt-2"><WindowButtons /></div>
      </div>
      <div className="mt-[3px] flex h-[26px] shrink-0 pr-1 pl-[3px]">
        <h2 className="flex flex-1 items-center gap-1 border-b border-[#b4c3d6] bg-linear-to-b from-white to-[#e2e9f1] pb-1 pl-3 text-[15px] font-bold text-[#1f497d]">
          <LabelIcon />
          StaticText: Static Text
        </h2>
        <div className="relative ml-px w-[116px]">
          <select aria-label="Search Property" className="h-[23px] w-full appearance-none border border-[#999] bg-white pl-0.5 text-[#3b5f8c]">
            <option>Search Property</option>
          </select>
          <span className="pointer-events-none absolute top-2.5 right-1.5 flex"><DownTriangle color="#000" /></span>
        </div>
      </div>
      <div className="mr-1 ml-[3px] flex h-[35px] shrink-0 items-center gap-1 border-b border-[#999] pt-0.5 pr-1 pl-[5px]">
        <Grip />
        <button className="flex h-5 w-[101px] items-center gap-1 border border-[#99d1ff] bg-[#cce8ff] pl-1">
          <Svg><path d="M.5 1.500h15v4H6v10H2V5.500H.5z" fill="#e7a868" stroke="#a8672c" /><path d="M3 3v1M6 3v1M9 3v1M12 3v1M4 8h1M4 11h1" stroke="#7a4312" /></Svg>
          Appearance
        </button>
        <button className="flex items-center gap-1">
          <Svg className="size-3.5"><path d="M1 1h14v14H1z" stroke="#222" strokeWidth="2" /><path d="M8 2v12M2 8h12" stroke="#999" strokeDasharray="1 1" /></Svg>
          Borders
        </button>
        <button className="ml-2 flex items-center gap-1"><LabelIcon />Static Text</button>
        <span className="mb-3 ml-auto text-[#3b3b9a]">»</span>
      </div>
      <div className="mt-1.5 mr-1.5 ml-2 flex min-h-0 flex-1 pb-0.5">
        <div className="min-w-0 flex-1 overflow-hidden pt-3">
          <GroupTitle title="Location" />
          <div className="mt-2 flex items-center">
            <Field id="x" label="x" value="393 px" labelWidth="w-[91px]" />
            <Field id="y" label="y" value="38 px" labelWidth="w-[22px]" />
          </div>
          <div className="mt-[5px] flex items-center">
            <label htmlFor="position" className="w-[91px] shrink-0 pr-2 text-right whitespace-nowrap">Position Type</label>
            <div className="relative">
              <select id="position" className="h-[25px] w-[159px] appearance-none border border-[#adadad] bg-[#e1e1e1] px-1">
                <option>Fix Relative To Top</option>
              </select>
              <span className="pointer-events-none absolute top-2 right-1"><Chevron dir="down" thin /></span>
            </div>
          </div>
          <div className="mt-[11px]"><GroupTitle title="Size" /></div>
          <div className="mt-2 flex items-center">
            <Field id="w" label="w" value="100 px" labelWidth="w-[85px]" />
            <Field id="h" label="h" value="30 px" labelWidth="w-[23px]" />
          </div>
          <div className="mt-[5px] mr-5 ml-[85px] h-5 border border-[#adadad] bg-[#e1e1e1]" />
        </div>
        <VScroll thumb="h-9" />
      </div>
    </section>
  );
}

/* ---------- red pen annotations ---------- */

const frames = [
  [1, 38.5, 268.5, 233.5],
  [1, 283.5, 278.5, 394],
  [287.5, 41.5, 677, 445],
  [289.5, 496.5, 680.5, 42],
  [289.5, 545.5, 680.5, 137],
  [980.5, 63.5, 367, 167],
  [979.5, 237.5, 366, 172],
  [985.5, 462.5, 375, 215],
];

const strokes = [
  'M127.500 94L125 116 124.500 188',
  'M84.500 402L87 396.500 107 381H133L139 386 138 389 142 399V426L134 446 108 489 82 512 123 503 155 502.500',
  'M378.500 250.500H410L418 255 440 278 441 290 432 310 423 318 404 322 434 324 450 333 456 342 457 370 450 383 434 397 412 400 393 401',
  'M474 503V532H509L520 527 526 525M505 510L507 527 508.500 538',
  'M521 584H500L482 588M481 585V597L478 614 495 609 508 612 512 625 510 640 505 643H488',
  'M1127 101L1117 112 1103 137 1098 149 1096 157 1095 177 1094 183 1098 193 1104 198H1122L1133 195 1143 189 1127 177H1108',
  'M1098 283H1148L1140 305 1139 313 1135 322 1133 339',
  'M1152 494L1157 482 1172 485 1182 489 1187 498V522L1178 533 1147 557 1123 570 1118 578 1119 593 1127 607 1140 613 1160 623H1187L1198 613 1193 603 1177 587 1147 557 1134 535V512L1142 495 1155 482',
  'M588 198H568L564 202 567 208 572 216 580 219 583 213 588 203V263L585 277',
  'M676 211L677 229 673 256 670 278M694 228L702 227 713 228 714 239 710 254 711 266 705 271H694Z',
];

function Annotations() {
  return (
    <svg viewBox="0 0 1365 693" className="pointer-events-none absolute inset-0 h-full w-full" fill="none" stroke="#f00" aria-hidden="true">
      <g strokeWidth="3">
        {frames.map(([x, y, w, h]) => (
          <rect key={`${x}-${y}`} x={x} y={y} width={w} height={h} />
        ))}
      </g>
      <g strokeWidth="6" strokeLinecap="round" strokeLinejoin="round">
        {strokes.map((d) => (
          <path key={d} d={d} />
        ))}
      </g>
      <path d="M588 198L655 110M692 205L735 116" strokeWidth="2.500" />
      <path d="M671.500 89.500L646 112l4 6 6 1zM748 93l-22 25 4 7 7 1z" fill="#f00" />
    </svg>
  );
}

export default function App() {
  return (
    <div className="relative flex h-screen flex-col overflow-hidden bg-[#e1e6f6] font-['Noto_Sans',sans-serif] text-[12px] leading-5 text-black">
      <MainToolbar />
      <main className="flex min-h-0 flex-1 gap-[5px]">
        <div className="flex w-[278px] shrink-0 flex-col gap-1">
          <ProjectExplorer />
          <Outline />
        </div>
        <div className="flex min-w-0 flex-1 flex-col gap-1">
          <Editor />
          <ReportState />
        </div>
        <div className="flex w-[386px] shrink-0 flex-col gap-1">
          <Palette />
          <Properties />
        </div>
      </main>
      <footer className="flex h-6 shrink-0 items-start justify-end gap-1 pr-[281px]">
        <button aria-label="Update status" className="flex h-[22px] w-[30px] items-center justify-center border-r border-b border-[#aab]">
          <Svg><path d="M7.500 6.500h8v6h-8z" fill="#dce6f2" stroke="#556" /><path d="M10 14h5" stroke="#556" /><path d="M1 6l4-5 4 5H7v2H3V6z" fill="#fbdc8c" stroke="#c08a2a" /><circle cx="5" cy="12" r="3.500" fill="#e9e2b0" stroke="#a39a56" /></Svg>
        </button>
        <Grip />
      </footer>
      <Annotations />
      <p className="pointer-events-none absolute right-2 bottom-2 text-[15px] text-white [text-shadow:1px_1px_1px_#999]">https://blog.csdn.net/ldu_liuyang</p>
    </div>
  );
}
